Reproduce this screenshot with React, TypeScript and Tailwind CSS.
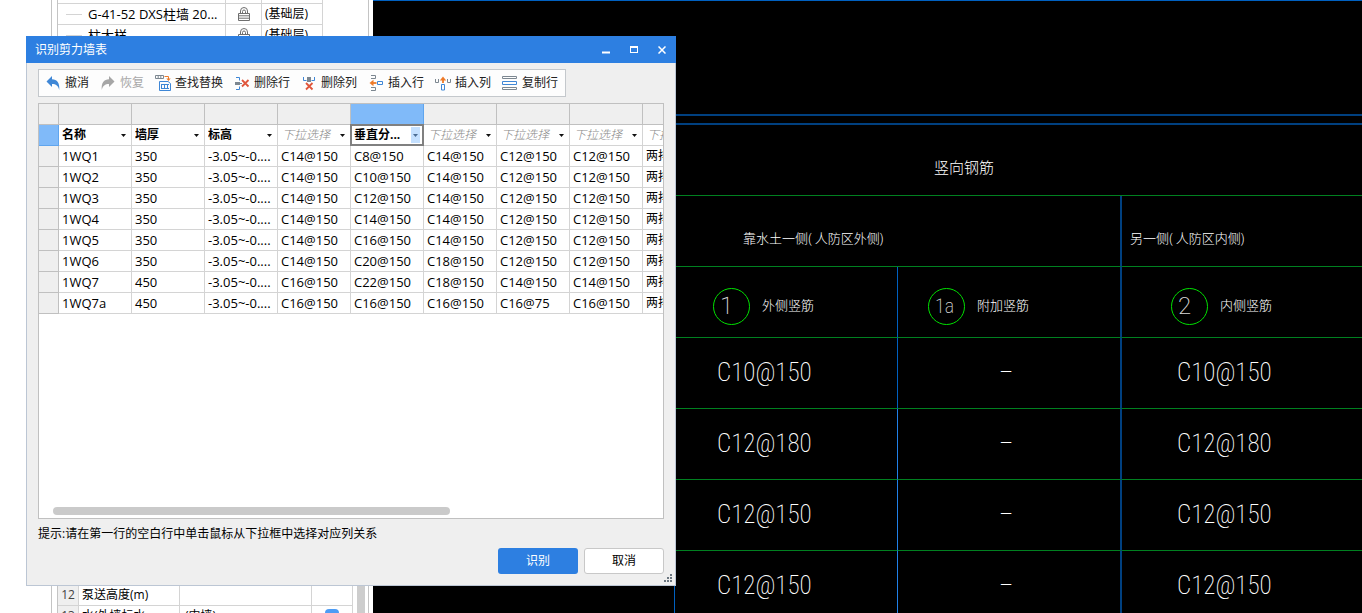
import React from "react";
import clsx from "clsx";

const CJK = "font-['Open_Sans','Noto_Sans_CJK_SC',sans-serif]";

const wallRows = [
  ["1WQ1", "350", "-3.05~-0....", "C14@150", "C8@150", "C14@150", "C12@150", "C12@150"],
  ["1WQ2", "350", "-3.05~-0....", "C14@150", "C10@150", "C14@150", "C12@150", "C12@150"],
  ["1WQ3", "350", "-3.05~-0....", "C14@150", "C12@150", "C14@150", "C12@150", "C12@150"],
  ["1WQ4", "350", "-3.05~-0....", "C14@150", "C14@150", "C14@150", "C12@150", "C12@150"],
  ["1WQ5", "350", "-3.05~-0....", "C14@150", "C16@150", "C14@150", "C12@150", "C12@150"],
  ["1WQ6", "350", "-3.05~-0....", "C14@150", "C20@150", "C18@150", "C12@150", "C12@150"],
  ["1WQ7", "450", "-3.05~-0....", "C16@150", "C22@150", "C18@150", "C14@150", "C14@150"],
  ["1WQ7a", "450", "-3.05~-0....", "C16@150", "C16@150", "C16@150", "C16@75", "C16@150"],
];

const PLACEHOLDER = "下拉选择";
const mapping = [
  "名称",
  "墙厚",
  "标高",
  PLACEHOLDER,
  "垂直分...",
  PLACEHOLDER,
  PLACEHOLDER,
  PLACEHOLDER,
  PLACEHOLDER,
];
const ACTIVE = 4;

const cadRows = ["C10@150", "C12@180", "C12@150", "C12@150"];

const UndoShape = () => (
  <path d="M1.5 6.5 7 1v3.2c5 0 8 3.8 7.2 10.8C13.3 10.8 11 9 7 9v3Z" />
);

const icons = {
  undo: (
    <g fill="#3f87d6">
      <UndoShape />
    </g>
  ),
  redo: (
    <g fill="#a6a6a6" transform="matrix(-1 0 0 1 16 0)">
      <UndoShape />
    </g>
  ),
  find: (
    <>
      <path d="M.5 .5h8v3h-8zM3.2 .5v3M5.8 .5v3" stroke="#7c8790" />
      <path d="M9.5 1.5h4v3" stroke="#ee7a28" />
      <path d="M11.3 3.5h4.4L13.500 6z" fill="#ee7a28" />
      <path d="M4.500 6.500h8.500l2.500 2v7h-11z" stroke="#3f87d6" />
      <path d="M6 9.500h8M6.500 9v5M9.500 9v5M12.500 9v5M6 13.500h8" stroke="#3f87d6" />
    </>
  ),
  deleteRow: (
    <>
      <path d="M2 2.500h3.500v3M2 14.500h3.500v-3" stroke="#3f87d6" />
      <path d="M1 7h5v3H1z" fill="#7c8790" />
      <path d="M5 8.500h3" stroke="#7c8790" />
      <path d="m8 5 6.500 6.500M14.500 5 8 11.500" stroke="#e0563c" strokeWidth="1.8" />
    </>
  ),
  deleteCol: (
    <>
      <path d="M2.500 2v3.500h3M13.500 2v3.500h-3" stroke="#3f87d6" />
      <path d="M6 2h4v5H6z" fill="#7c8790" />
      <path d="m5 8 6.500 6.500M11.500 8 5 14.500" stroke="#e0563c" strokeWidth="1.8" />
    </>
  ),
  insertRow: (
    <>
      <path d="M3 .5h4.500v3H3M3 15.500h4.500v-3H3" stroke="#7c8790" />
      <path d="M4 8h4.500" stroke="#ee7a28" strokeWidth="1.8" />
      <path d="M1.500 8 5.500 4.800v6.400z" fill="#ee7a28" />
      <path d="M9.500 6.500h5v3h-5z" stroke="#3f87d6" />
    </>
  ),
  insertCol: (
    <>
      <path d="M.5 4v3.500h3V4M12.500 4v3.500h3V4" stroke="#7c8790" />
      <path d="M8 4v4" stroke="#ee7a28" strokeWidth="1.8" />
      <path d="M8 1.500 11.200 5.500H4.800z" fill="#ee7a28" />
      <path d="M6.500 9.500h3V15h-3z" stroke="#3f87d6" />
    </>
  ),
  copyRow: (
    <>
      <path d="M.5 1.500h14v2H.5zM.5 12.500h14v2H.5z" stroke="#7c8790" />
      <path d="M.5 6.500h14v3H.5z" stroke="#3f87d6" />
    </>
  ),
};

const tools: { icon: keyof typeof icons; label: string; disabled?: boolean }[] = [
  { icon: "undo", label: "撤消" },
  { icon: "redo", label: "恢复", disabled: true },
  { icon: "find", label: "查找替换" },
  { icon: "deleteRow", label: "删除行" },
  { icon: "deleteCol", label: "删除列" },
  { icon: "insertRow", label: "插入行" },
  { icon: "insertCol", label: "插入列" },
  { icon: "copyRow", label: "复制行" },
];

function Lock() {
  return (
    <svg viewBox="0 0 12 14" className="w-3 h-3.5 mx-auto" fill="none" stroke="#6e6e6e">
      <path d="M2.500 6V4a3.500 3.500 0 0 1 7 0v2M4.500 6V4.500a1.500 1.500 0 0 1 3 0V6" />
      <path d="M.5 6.500h11v7H.5zM1 8.800h10M1 11.200h10" />
    </svg>
  );
}

function Sidebar() {
  const cell = "border-r border-b border-[#d4d4d4] p-0 h-[21px] whitespace-nowrap";

  return (
    <aside className="w-[373px] shrink-0 bg-white pl-[51px] pr-1 text-[12px] leading-4 text-black">
      <div className="h-full flex flex-col justify-between border-x border-[#c4c4c4] pl-[5px]">
        <table className="table-fixed border-separate border-spacing-0 border-l border-[#c4c4c4] w-[266px]">
          <colgroup>
            <col />
            <col className="w-9" />
            <col className="w-[61px]" />
          </colgroup>
          <tbody>
            <tr>
              <td className="border-r border-b border-[#d4d4d4] p-0 h-1" />
              <td className="border-r border-b border-[#d4d4d4] p-0 h-1" />
              <td className="border-r border-b border-[#d4d4d4] p-0 h-1" />
            </tr>
            {["G-41-52 DXS柱墙 20...", "柱大样"].map((name) => (
              <tr key={name}>
                <td className={clsx(cell, "text-[13px]")}>
                  <div className="flex items-center gap-1.5 pl-2">
                    <span className="w-4 border-t border-[#d4d4d4]" />
                    {name}
                  </div>
                </td>
                <td className={cell}>
                  <Lock />
                </td>
                <td className={clsx(cell, "pl-[3px]")}>(基础层)</td>
              </tr>
            ))}
          </tbody>
        </table>

        <div className="h-7 flex justify-between pr-[3px] overflow-hidden">
          <table className="table-fixed border-separate border-spacing-0 border-l border-[#c4c4c4] w-[296px]">
            <colgroup>
              <col className="w-[21px]" />
              <col className="w-[101px]" />
              <col className="w-[132px]" />
              <col />
            </colgroup>
            <tbody>
              <tr>
                <th className={clsx(cell, "bg-[#efefef] font-normal text-[#444]")}>12</th>
                <td className={clsx(cell, "pl-[3px]")}>泵送高度(m)</td>
                <td className={cell} />
                <td className={cell} />
              </tr>
              <tr>
                <th className={clsx(cell, "bg-[#efefef] font-normal text-[#444]")}>13</th>
                <td className={clsx(cell, "pl-[3px]")}>水(外墙标水</td>
                <td className={clsx(cell, "pl-[5px]")}>(内墙)</td>
                <td className={cell}>
                  <input
                    type="checkbox"
                    aria-label="水(外墙标水"
                    defaultChecked
                    className="block mx-auto w-3.5 h-3.5 appearance-none rounded-sm bg-[#4d9cf5]"
                  />
                </td>
              </tr>
            </tbody>
          </table>
          <div className="w-2 bg-[#cdcdcd]" />
        </div>
      </div>
    </aside>
  );
}

function CadMark({ mark, small, label }: { mark: string; small?: boolean; label: string }) {
  return (
    <div className="flex items-center gap-3">
      <span
        className={clsx(
          "w-[37px] h-[37px] rounded-full border border-[#00e000] flex items-center text-[#d8d8d8]",
          small ? "pl-1.5 text-[20px]" : "pl-1.5 text-[24px] font-['Roboto',sans-serif]"
        )}
      >
        {mark}
      </span>
      <span className="text-[13px] font-light">{label}</span>
    </div>
  );
}

function Drawing() {
  const line = "border-b border-b-[#008020] p-0 h-[71px] text-left font-extralight";

  return (
    <main className="flex-1 min-w-0 bg-black border-t border-[#0060c0] text-white overflow-hidden font-['Roboto_Condensed','Noto_Sans_CJK_SC',sans-serif]">
      <div className="h-[115px] border-b-2 border-[#004080]" />
      <div className="h-[9px] border-b-2 border-[#004080]" />
      <table className="w-full table-fixed border-separate border-spacing-0">
        <colgroup>
          <col className="w-[302px]" />
          <col className="w-[223px]" />
          <col className="w-[224px]" />
          <col />
        </colgroup>
        <thead>
          <tr>
            <th rowSpan={3} className="p-0 border-r border-[#0060c0]" />
            <th colSpan={3} className={clsx(line, "pl-[259px] pt-4 text-[15px]")}>
              <span className="font-light">竖向钢筋</span>
            </th>
          </tr>
          <tr>
            <th colSpan={2} className={clsx(line, "border-r-2 border-r-[#004080] pl-[68px] pt-4 text-[13px]")}>
              <span className="font-light">靠水土一侧( 人防区外侧)</span>
            </th>
            <th className={clsx(line, "pl-2 pt-4 text-[13px]")}>
              <span className="font-light">另一侧( 人防区内侧)</span>
            </th>
          </tr>
          <tr>
            <th className={clsx(line, "border-r border-r-[#0060c0] pl-[38px] pt-2")}>
              <CadMark mark="1" label="外侧竖筋" />
            </th>
            <th className={clsx(line, "border-r-2 border-r-[#004080] pl-[30px] pt-2")}>
              <CadMark mark="1a" small label="附加竖筋" />
            </th>
            <th className={clsx(line, "pl-[49px] pt-2")}>
              <CadMark mark="2" label="内侧竖筋" />
            </th>
          </tr>
        </thead>
        <tbody className="text-[25px]">
          {cadRows.map((value, i) => (
            <tr key={i}>
              <td className="p-0 border-r border-[#0060c0]" />
              <td className={clsx(line, "border-r pl-[42px]", i < 1 ? "border-r-[#0060c0]" : "border-r-[#2080e8]")}>
                {value}
              </td>
              <td className={clsx(line, "border-r-2 border-r-[#004080] pl-[101px]")}>–</td>
              <td className={clsx(line, "pl-[55px]")}>{value}</td>
            </tr>
          ))}
        </tbody>
      </table>
    </main>
  );
}

function MappingSelect({ value, active }: { value: string; active: boolean }) {
  return (
    <div className={clsx("relative h-5 flex items-center", active && "outline-2 -outline-offset-1 outline-[#808080]")}>
      <select
        aria-label={value}
        className={clsx(
          "w-full h-5 appearance-none bg-transparent text-[12px] leading-4 outline-none",
          value === PLACEHOLDER ? "pl-1 italic font-light text-[#888]" : "pl-[3px] font-bold text-black"
        )}
      >
        <option>{value}</option>
      </select>
      <span
        className={clsx(
          "absolute right-[3px] w-[9px] h-4 flex items-center justify-center pointer-events-none",
          active && "bg-[#c4e0ff]"
        )}
      >
        <svg viewBox="0 0 5 3" className="w-[5px] h-[3px]" fill={active ? "#4c6d94" : "#111"}>
          <path d="M0 0h5L2.500 3z" />
        </svg>
      </span>
    </div>
  );
}

function WallTable() {
  const border = "border-r border-b p-0 h-[21px]";

  return (
    <div className="mt-1.5 h-[416px] flex flex-col justify-between border border-[#c0c0c0] bg-white overflow-hidden">
      <table className="table-fixed border-separate border-spacing-0 w-[677px] text-black">
        <colgroup>
          <col className="w-5" />
          {mapping.map((_, i) => (
            <col key={i} className="w-[73px]" />
          ))}
        </colgroup>
        <thead>
          <tr>
            <th className={clsx(border, "border-[#c0c0c0] bg-[#efefef]")} />
            {mapping.map((_, i) => (
              <th
                key={i}
                className={clsx(
                  border,
                  i === ACTIVE ? "border-[#5fa5ee] bg-[#80baf9]" : "border-[#c0c0c0] bg-[#efefef]"
                )}
              />
            ))}
          </tr>
          <tr>
            <th className={clsx(border, "border-[#5fa5ee] bg-[#80baf9]")} />
            {mapping.map((value, i) => (
              <th key={i} className={clsx(border, "border-[#d4d4d4]")}>
                <MappingSelect value={value} active={i === ACTIVE} />
              </th>
            ))}
          </tr>
        </thead>
        <tbody className="text-[13px] leading-4">
          {wallRows.map((row) => (
            <tr key={row[0]}>
              <th className={clsx(border, "border-[#c0c0c0] bg-[#efefef]")} />
              {row.map((value, i) => (
                <td key={i} className={clsx(border, "border-[#d4d4d4] pl-[3px] whitespace-nowrap")}>
                  {value}
                </td>
              ))}
              <td className={clsx(border, "border-[#d4d4d4] pl-[3px] text-[12px]")}>两排</td>
            </tr>
          ))}
        </tbody>
      </table>
      <div className="w-[397px] h-2 ml-3.5 mb-[3px] rounded-full bg-[#cacaca]" />
    </div>
  );
}

function RecognizeDialog() {
  return (
    <section
      role="dialog"
      aria-labelledby="dialog-title"
      className="absolute left-[26px] top-9 w-[650px] bg-[#efefef] text-[12px] leading-4"
    >
      <header className="h-[27px] pl-[9px] flex items-center justify-between bg-[#2d7fe1] text-white">
        <h1 id="dialog-title">识别剪力墙表</h1>
        <div className="flex">
          <button aria-label="最小化" className="w-7 h-[27px] flex items-center justify-center">
            <svg viewBox="0 0 8 8" className="w-2 h-2" fill="#fff">
              <path d="M0 5.500h8v2H0z" />
            </svg>
          </button>
          <button aria-label="最大化" className="w-7 h-[27px] flex items-center justify-center">
            <svg viewBox="0 0 8 8" className="w-2 h-2" fill="#fff">
              <path fillRule="evenodd" d="M0 0h8v7H0zM1 2v4h6V2z" />
            </svg>
          </button>
          <button aria-label="关闭" className="w-7 h-[27px] flex items-center justify-center">
            <svg viewBox="0 0 8 8" className="w-2 h-2" stroke="#fff" strokeWidth="1.5">
              <path d="m.5 .5 7 7M7.500 .5l-7 7" />
            </svg>
          </button>
        </div>
      </header>

      <div className="border-x border-b border-[#bcc6d4] px-[11px] pt-1.5 pb-[11px]">
        <div className="w-fit h-7 pl-px pr-0.5 flex items-center gap-px border border-[#c4c8cc] bg-[#fdfdfd]">
          {tools.map(({ icon, label, disabled }) => (
            <button
              key={icon}
              disabled={disabled}
              className={clsx(
                "h-6 px-[5px] flex items-center gap-1 rounded-sm whitespace-nowrap",
                disabled ? "text-[#a8a8a8]" : "text-[#222]"
              )}
            >
              <svg viewBox="0 0 16 16" className="w-4 h-4" fill="none">
                {icons[icon]}
              </svg>
              {label}
            </button>
          ))}
        </div>

        <WallTable />

        <p className="mt-[7px] text-black">提示:请在第一行的空白行中单击鼠标从下拉框中选择对应列关系</p>

        <div className="mt-1.5 flex justify-end gap-1.5">
          <button className="w-20 h-[26px] rounded-[3px] bg-[#2d7fe1] text-white">识别</button>
          <button className="w-20 h-[26px] rounded-[3px] border border-[#c8c8c8] bg-white text-black">取消</button>
        </div>
      </div>

      <svg viewBox="0 0 8 8" className="absolute right-1 bottom-1 w-2 h-2" fill="#6b7680">
        <path d="M6 0h2v2H6zM3 3h2v2H3zM6 3h2v2H6zM0 6h2v2H0zM3 6h2v2H3zM6 6h2v2H6z" />
      </svg>
    </section>
  );
}

export default function App() {
  return (
    <div className={clsx("relative h-screen flex overflow-hidden bg-white", CJK)}>
      <Sidebar />
      <Drawing />
      <RecognizeDialog />
    </div>
  );
}
